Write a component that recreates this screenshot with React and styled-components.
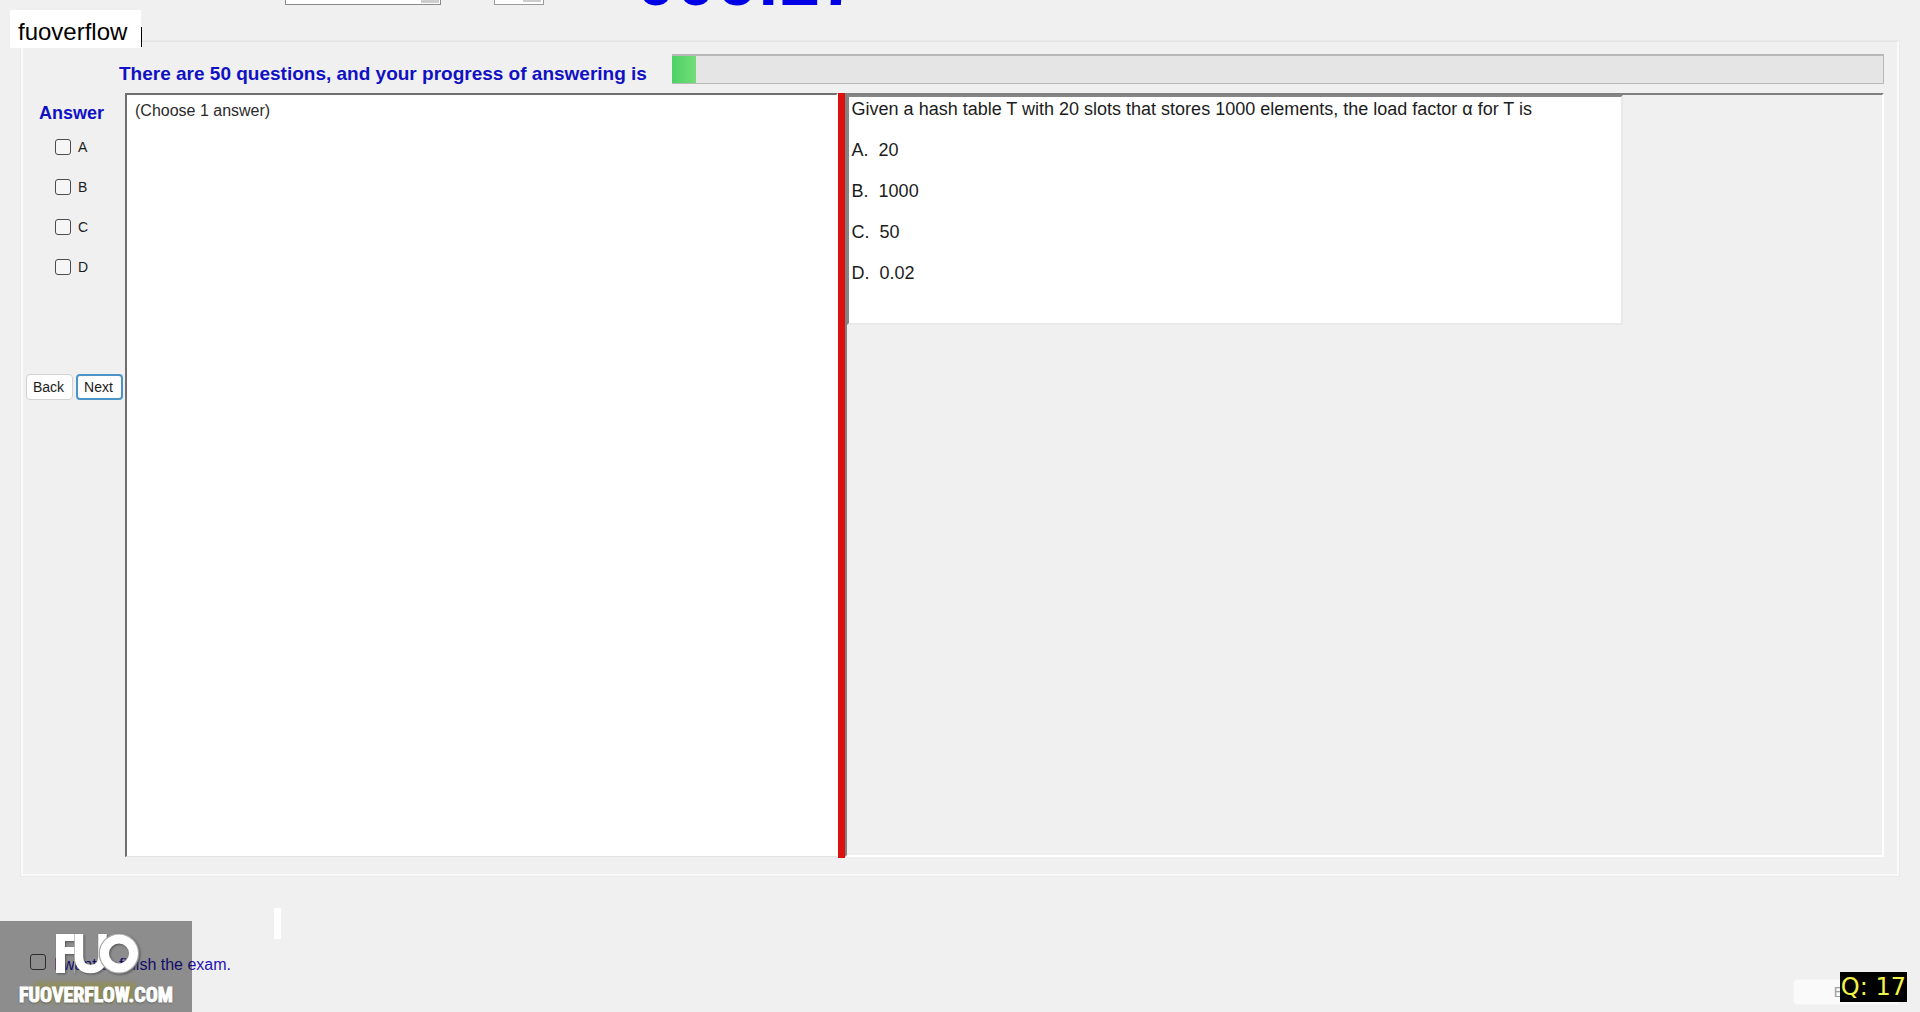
import React, { useState } from "react";
import styled, { createGlobalStyle } from "styled-components";

const GlobalStyle = createGlobalStyle`
  * {
    box-sizing: border-box;
  }
  body {
    margin: 0;
    background: #f0f0f0;
    font-family: "Liberation Sans", Arial, sans-serif;
    color: #1c1c1c;
  }
`;
const Page = styled.div`
  position: relative;
  min-height: 100vh;
  display: flex;
  flex-direction: column;
  overflow: hidden;
`;
const Header = styled.header`
  display: flex;
  align-items: flex-end;
  height: 100px;
  margin-top: -59px;
  padding: 0 0 36px 285px;
`;
const FontSelect = styled.select`
  width: 156px;
  height: 28px;
  border: 1px solid #8a8a8a;
  border-radius: 0;
  background: linear-gradient(#cdcdcd, #cdcdcd) right 1px top / 18px 25px no-repeat #fff;
  appearance: none;
`;
const SizeInput = styled.input`
  width: 50px;
  height: 28px;
  margin-left: 53px;
  border: 1px solid #9a9a9a;
  background: linear-gradient(#cdcdcd, #cdcdcd) right 2px top / 18px 24px no-repeat #fff;
`;
const Timer = styled.div`
  margin-left: 92px;
  font-size: 72px;
  line-height: 50px;
  font-weight: bold;
  color: #0000e6;
`;
const GroupBox = styled.main`
  flex: 1;
  display: flex;
  flex-direction: column;
  margin: 0 21px;
  padding: 12px 13px 17px 0;
  border: 2px solid #fafafa;
  border-top: 1px solid #e3e3e3;
  outline: 1px solid #eaeaea;
`;
const ProgressRow = styled.div`
  display: flex;
  align-items: flex-end;
  gap: 25px;
  padding-left: 96px;
  margin-bottom: 9px;
`;
const Title = styled.h2`
  margin: 0;
  font-size: 19px;
  line-height: 20px;
  font-weight: bold;
  color: #1010c4;
`;
const ProgressTrack = styled.div`
  flex: 1;
  height: 30px;
  border: 1px solid #b8b8b8;
  border-top-width: 2px;
  border-left: 0;
  background: #e5e5e5;
`;
const ProgressFill = styled.div`
  height: 100%;
  background: linear-gradient(90deg, #4cd264, #74dd78);
`;
const Columns = styled.div`
  flex: 1;
  display: flex;
`;
const Side = styled.aside`
  flex: 0 0 102px;
`;
const Answers = styled.fieldset`
  margin: 0;
  padding: 0 0 0 32px;
  border: 0;
  height: 281px;
`;
const Option = styled.label`
  display: flex;
  align-items: center;
  gap: 7px;
  height: 16px;
  margin-bottom: 24px;
  font-size: 14px;
  line-height: 14px;
`;
const Check = styled.input`
  appearance: none;
  width: 16px;
  height: 16px;
  margin: 0;
  border: 1px solid #4c4c4c;
  border-radius: 3px;
  background: ${(p) => (p.$clear ? "transparent" : "#f6f6f6")};
  &:checked {
    background: #0067c0;
  }
`;
const SideTitle = styled.legend`
  margin-left: -16px;
  padding: 8px 0 14px;
  font-size: 18px;
  line-height: 24px;
  font-weight: bold;
  color: #1010c4;
`;
const Buttons = styled.div`
  display: flex;
  gap: 3px;
  padding-left: 3px;
`;
const Button = styled.button`
  width: 47px;
  height: 26px;
  padding: 0 2px 0 0;
  border: ${(p) => (p.$primary ? "2px solid #4a94c8" : "1px solid #d2d2d2")};
  border-radius: 4px;
  background: #fdfdfd;
  font-family: inherit;
  font-size: 14px;
  color: #1c1c1c;
`;
const Note = styled.textarea`
  flex: 693 1 0;
  min-width: 0;
  padding: 6px 8px;
  border: 2px solid #6f6f6f;
  border-right-color: #fff;
  border-bottom: 1px solid #e3e3e3;
  border-radius: 0;
  background: #fff;
  font-family: inherit;
  font-size: 16px;
  line-height: 20px;
  color: #2a2a2a;
  resize: none;
  outline: none;
`;
const Splitter = styled.div`
  flex: 0 0 7px;
  background: #dd1010;
  margin: 0 0 -1px;
`;
const QuestionPane = styled.section`
  flex: 1036 1 0;
  min-width: 0;
  border: 2px solid #808080;
  border-right-color: #fff;
  border-bottom-color: #fff;
`;
const Question = styled.div`
  width: 75%;
  height: 230px;
  padding: 0 3px;
  border: 2px solid #868686;
  border-right-color: #e9e9e9;
  border-bottom-color: #e9e9e9;
  background: #fff;
  font-size: 18px;
  line-height: 24px;
  p {
    margin: 0 0 17px;
    white-space: pre;
  }
`;
const Footer = styled.footer`
  display: flex;
  justify-content: space-between;
  align-items: flex-end;
  height: 136px;
  padding: 0 20px 7px 30px;
`;
const Finish = styled.label`
  display: flex;
  align-items: flex-start;
  gap: 8px;
  margin-bottom: 29px;
  font-size: 16px;
  line-height: 22px;
  color: #2413b5;
`;
const Caret = styled.div`
  align-self: flex-start;
  width: 7px;
  height: 31px;
  margin: 32px auto 0 43px;
  background: #fff;
`;
const ExitButton = styled(Button)`
  width: 107px;
  border-color: #f4f4f4;
  background: #fafafa;
  color: #a0a0a0;
`;
const Tag = styled.div`
  position: absolute;
  left: 10px;
  top: 10px;
  width: 131px;
  height: 38px;
  padding-left: 8px;
  background: #fff;
  color: #000;
  font-size: 24px;
  line-height: 44px;
  &::after {
    content: "";
    position: absolute;
    right: -1px;
    bottom: 1px;
    width: 1px;
    height: 20px;
    background: #000;
  }
`;
const Watermark = styled.div`
  position: absolute;
  left: 0;
  bottom: 0;
  width: 192px;
  height: 91px;
  background: rgba(0, 0, 0, 0.41);
  display: flex;
  flex-direction: column;
  align-items: center;
  padding-top: 13px;
  color: #fff;
  font: bold 20px/24px "Roboto Condensed", "Open Sans Condensed", "Liberation Sans Narrow", sans-serif;
  -webkit-text-stroke: 1px #fff;
  text-shadow: 0 1px 2px #444;
  svg {
    margin-bottom: 9px;
    margin-left: 4px;
    filter: drop-shadow(1px 1px 1px #555);
  }
`;
const Highlight = styled.div`
  position: absolute;
  left: 34px;
  bottom: 10px;
  width: 102px;
  height: 20px;
  background: #8f8d5f;
  filter: blur(2px);
`;
const SiteName = styled.span`
  position: relative;
`;
const Counter = styled.div`
  position: absolute;
  right: 13px;
  bottom: 10px;
  padding: 0 1px;
  background: #000;
  color: #f2f24a;
  font: 24px/30px "DejaVu Sans", sans-serif;
`;

const answers = ["A", "B", "C", "D"];
const question = [
  "Given a hash table T with 20 slots that stores 1000 elements, the load factor α for T is",
  "A.  20",
  "B.  1000",
  "C.  50",
  "D.  0.02",
];

function Logo() {
  return (
    <svg width="84" height="40" viewBox="0 0 84 40" fill="none" stroke="#fff">
      <path d="M4.5 39V0" strokeWidth="9" />
      <path d="M0 3.5H19M9 16.5H19" strokeWidth="7" />
      <path d="M23 0V23C23 31 27 35 34.5 35S46.5 31 46.5 23V0" strokeWidth="8.5" />
      <path d="M18.5 0V39" stroke="#b5b5b5" strokeWidth="0.8" />
      <circle cx="63" cy="19.5" r="19.5" stroke="#a5a5a5" strokeWidth="1.5" />
      <circle cx="63" cy="19.5" r="14.5" strokeWidth="9" />
    </svg>
  );
}

function App() {
  const [picked, setPicked] = useState([]);
  const toggle = (name) =>
    setPicked(picked.includes(name) ? picked.filter((p) => p !== name) : [...picked, name]);

  return (
    <Page>
      <GlobalStyle />
      <Header>
        <FontSelect aria-label="Font" />
        <SizeInput aria-label="Size" />
        <Timer>006:27</Timer>
      </Header>
      <GroupBox>
        <ProgressRow>
          <Title>There are 50 questions, and your progress of answering is</Title>
          <ProgressTrack>
            <ProgressFill style={{ width: "2%" }} />
          </ProgressTrack>
        </ProgressRow>
        <Columns>
          <Side>
            <Answers>
              <SideTitle>Answer</SideTitle>
              {answers.map((name) => (
                <Option key={name}>
                  <Check type="checkbox" checked={picked.includes(name)} onChange={() => toggle(name)} />
                  {name}
                </Option>
              ))}
            </Answers>
            <Buttons>
              <Button>Back</Button>
              <Button $primary>Next</Button>
            </Buttons>
          </Side>
          <Note readOnly aria-label="Instructions" value="(Choose 1 answer)" />
          <Splitter />
          <QuestionPane>
            <Question>
              {question.map((line) => (
                <p key={line}>{line}</p>
              ))}
            </Question>
          </QuestionPane>
        </Columns>
      </GroupBox>
      <Footer>
        <Finish>
          <Check type="checkbox" $clear />
          I want to finish the exam.
        </Finish>
        <Caret />
        <ExitButton disabled>Exit</ExitButton>
      </Footer>
      <Tag>fuoverflow</Tag>
      <Watermark>
        <Highlight />
        <Logo />
        <SiteName>FUOVERFLOW.COM</SiteName>
      </Watermark>
      <Counter>Q: 17</Counter>
    </Page>
  );
}

export default App;
